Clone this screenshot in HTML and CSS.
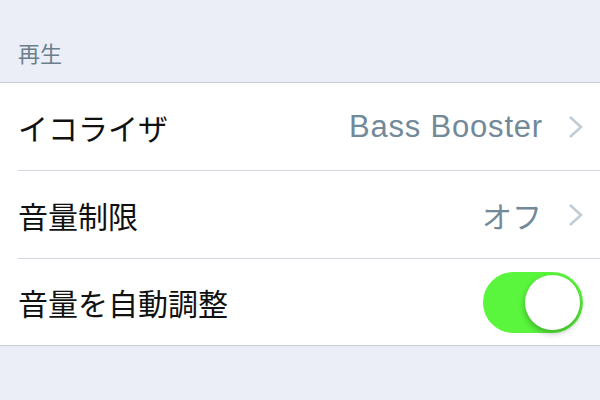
FILE: index.html
```html
<!DOCTYPE html>
<html lang="ja">
<head>
    <meta charset="UTF-8">
    <meta name="viewport" content="width=device-width, initial-scale=1.0">
    <title>再生</title>
    <link rel="stylesheet" href="styles.css">
</head>
<body>
    <div class="section-title">再生</div>
    <div class="group">
        <div class="row">
            <div class="row-inner">
                <span class="label">イコライザ</span>
                <span class="value latin">Bass Booster</span>
                <svg class="chevron" width="15" height="24" viewBox="0 0 15 24"><polyline points="2,2 13,12 2,22" fill="none" stroke="#c2ccd5" stroke-width="2.6"/></svg>
            </div>
        </div>
        <div class="row">
            <div class="row-inner">
                <span class="label">音量制限</span>
                <span class="value">オフ</span>
                <svg class="chevron" width="15" height="24" viewBox="0 0 15 24"><polyline points="2,2 13,12 2,22" fill="none" stroke="#c2ccd5" stroke-width="2.6"/></svg>
            </div>
        </div>
        <div class="row">
            <div class="row-inner last">
                <span class="label">音量を自動調整</span>
                <div class="toggle"><div class="knob"></div></div>
            </div>
        </div>
    </div>
</body>
</html>
```

FILE: styles.css
```css
body {
    margin: 0;
    background-color: #ebeef7;
    font-family: "Noto Sans CJK JP", "Noto Sans", sans-serif;
}

.section-title {
    height: 82px;
    box-sizing: border-box;
    padding: 39px 0 0 18px;
    font-size: 22px;
    line-height: 26px;
    color: #6b7e8c;
}

.group {
    background-color: #fff;
    border-top: 1px solid #c9cdd6;
    border-bottom: 1px solid #c9cdd6;
}

.row {
    padding-left: 18px;
}

.row-inner {
    height: 87px;
    display: flex;
    align-items: center;
    padding-right: 17px;
    border-bottom: 1px solid #d3d8e0;
}

.row-inner.last {
    height: 86px;
    border-bottom: none;
}

.label {
    flex: 1;
    font-size: 30px;
    color: #111;
}

.value {
    font-size: 30px;
    color: #72899a;
    margin-right: 26px;
}

.value.latin {
    font-family: "Liberation Sans", sans-serif;
    font-size: 31px;
    letter-spacing: 0.8px;
    margin-right: 25px;
}

.chevron {
    display: block;
}

.toggle {
    width: 100px;
    height: 61px;
    box-sizing: border-box;
    padding: 3px;
    border-radius: 31px;
    background-color: #5af53d;
    display: flex;
    justify-content: flex-end;
}

.knob {
    width: 55px;
    height: 55px;
    border-radius: 50%;
    background-color: #fff;
    box-shadow: 0 3px 6px rgba(0, 0, 0, 0.3);
}
```
